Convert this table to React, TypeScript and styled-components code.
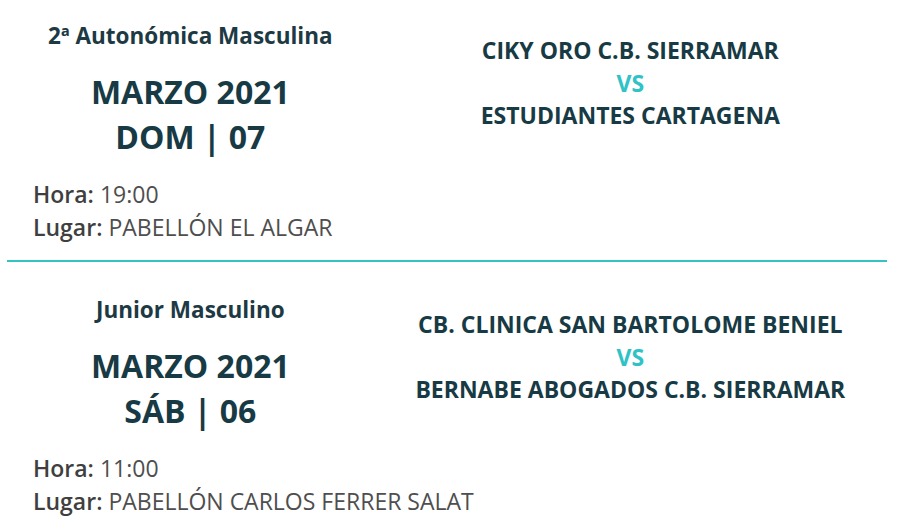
import React from "react";
import styled, { createGlobalStyle } from "styled-components";

const GlobalStyle = createGlobalStyle`
  body {
    margin: 0;
    background: #fff;
    font-family: "Open Sans", "Noto Sans", sans-serif;
  }
`;

const List = styled.div`
  width: 880px;
  margin-left: 7px;
`;

const Match = styled.section<{ $top: number; $last?: boolean }>`
  display: grid;
  grid-template-columns: minmax(0, 5fr) minmax(0, 7fr);
  padding-top: ${(p) => p.$top}px;
  padding-bottom: 16px;
  border-bottom: ${(p) => (p.$last ? "none" : "2px solid #33c4c0")};
`;

const Info = styled.div`
  display: flex;
  flex-direction: column;
`;

const Category = styled.h3`
  margin: 0;
  text-align: center;
  font-size: 22.5px;
  line-height: 24px;
  font-weight: 700;
  color: #1d3a44;
  white-space: nowrap;
`;

const DateBlock = styled.div`
  margin-top: 21px;
  text-align: center;
  font-size: 32px;
  line-height: 45px;
  font-weight: 700;
  color: #173a44;
`;

const Details = styled.div`
  margin-top: 19px;
  padding-left: 26px;
  font-size: 23px;
  line-height: 33px;
  color: #4e4e4e;
  white-space: nowrap;
`;

const Label = styled.b`
  font-weight: 600;
  color: #3f3f3f;
`;

const Teams = styled.div`
  padding-top: 10px;
  text-align: center;
  font-size: 23px;
  line-height: 32.5px;
  font-weight: 700;
  color: #173a44;
  white-space: nowrap;
`;

const Vs = styled.div`
  color: #2fc2c6;
`;

type MatchData = {
  category: string;
  month: string;
  day: string;
  hora: string;
  lugar: string;
  home: string;
  away: string;
};

const matches: MatchData[] = [
  {
    category: "2ª Autonómica Masculina",
    month: "MARZO 2021",
    day: "DOM | 07",
    hora: "19:00",
    lugar: "PABELLÓN EL ALGAR",
    home: "CIKY ORO C.B. SIERRAMAR",
    away: "ESTUDIANTES CARTAGENA",
  },
  {
    category: "Junior Masculino",
    month: "MARZO 2021",
    day: "SÁB | 06",
    hora: "11:00",
    lugar: "PABELLÓN CARLOS FERRER SALAT",
    home: "CB. CLINICA SAN BARTOLOME BENIEL",
    away: "BERNABE ABOGADOS C.B. SIERRAMAR",
  },
];

const App = () => {
  return (
    <>
      <GlobalStyle />
      <List>
        {matches.map((m, i) => (
          <Match key={i} $top={i === 0 ? 24 : 36} $last={i === matches.length - 1}>
            <Info>
              <Category>{m.category}</Category>
              <DateBlock>
                <div>{m.month}</div>
                <div>{m.day}</div>
              </DateBlock>
              <Details>
                <div>
                  <Label>Hora:</Label> {m.hora}
                </div>
                <div>
                  <Label>Lugar:</Label> {m.lugar}
                </div>
              </Details>
            </Info>
            <Teams>
              <div>{m.home}</div>
              <Vs>VS</Vs>
              <div>{m.away}</div>
            </Teams>
          </Match>
        ))}
      </List>
    </>
  );
};

export default App;
